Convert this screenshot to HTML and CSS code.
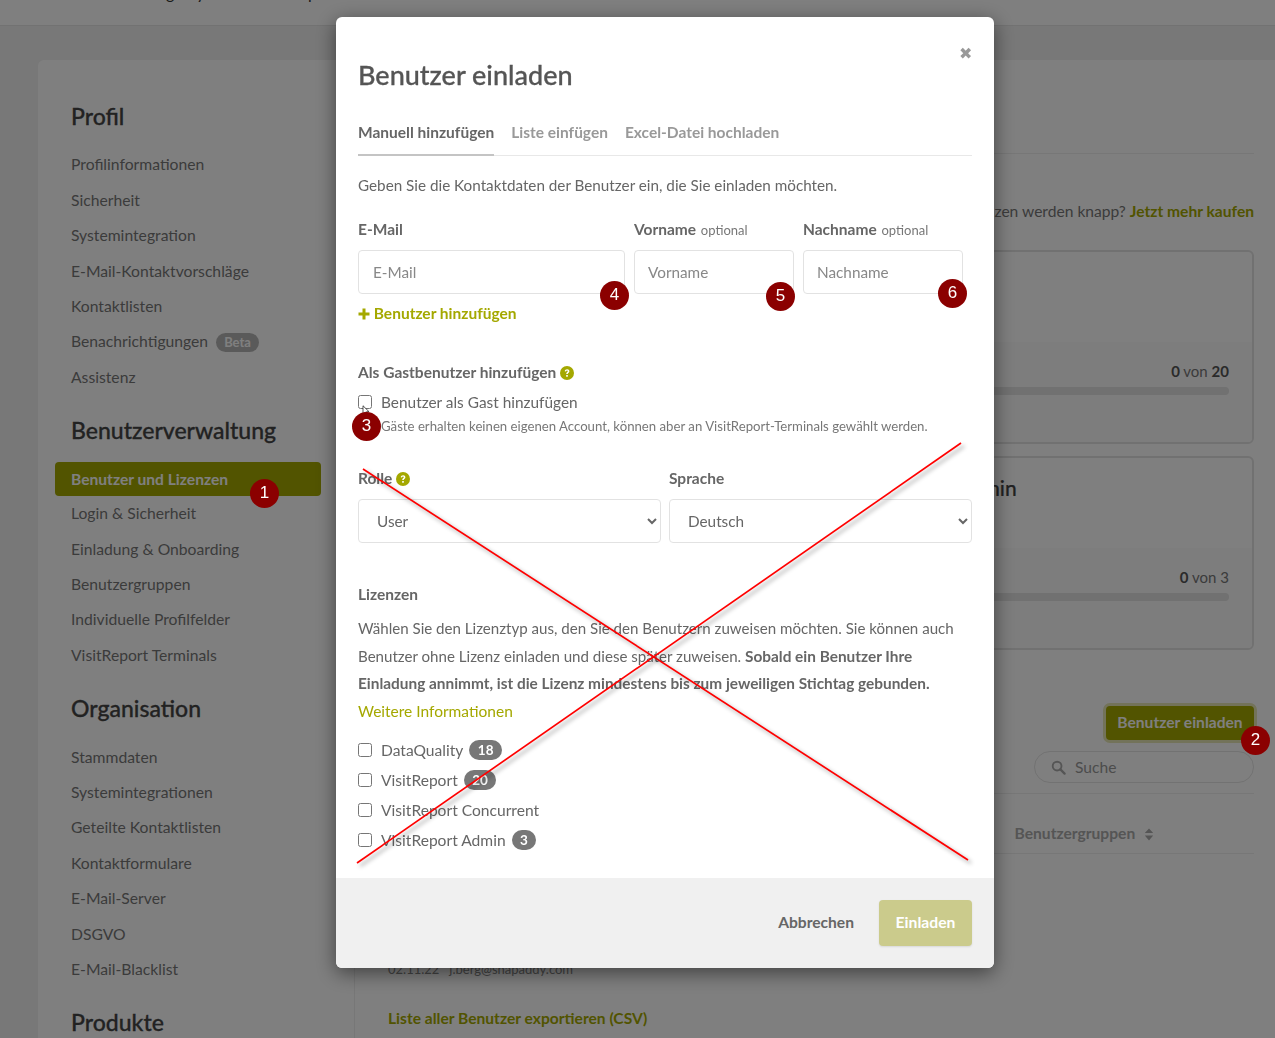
FILE: index.html
```html
<!DOCTYPE html>
<html lang="de">
<head>
    <meta charset="UTF-8">
    <title>Benutzer einladen</title>
    <link rel="stylesheet" href="styles.css">
</head>
<body>

    <div class="topbar"><span class="topbar-text">Registry Administrator panel</span></div>

    <div class="shell">
        <div class="side">
            <h2 class="side-title">Profil</h2>
            <a class="side-link">Profilinformationen</a>
            <a class="side-link">Sicherheit</a>
            <a class="side-link">Systemintegration</a>
            <a class="side-link">E-Mail-Kontaktvorschläge</a>
            <a class="side-link">Kontaktlisten</a>
            <a class="side-link">Benachrichtigungen <span class="beta">Beta</span></a>
            <a class="side-link">Assistenz</a>

            <h2 class="side-title">Benutzerverwaltung</h2>
            <a class="side-link active">Benutzer und Lizenzen</a>
            <a class="side-link">Login &amp; Sicherheit</a>
            <a class="side-link">Einladung &amp; Onboarding</a>
            <a class="side-link">Benutzergruppen</a>
            <a class="side-link">Individuelle Profilfelder</a>
            <a class="side-link">VisitReport Terminals</a>

            <h2 class="side-title">Organisation</h2>
            <a class="side-link">Stammdaten</a>
            <a class="side-link">Systemintegrationen</a>
            <a class="side-link">Geteilte Kontaktlisten</a>
            <a class="side-link">Kontaktformulare</a>
            <a class="side-link">E-Mail-Server</a>
            <a class="side-link">DSGVO</a>
            <a class="side-link">E-Mail-Blacklist</a>

            <h2 class="side-title">Produkte</h2>
        </div>

        <div class="main">
            <div class="main-rule"></div>
            <p class="low-note">Lizenzen werden knapp? <a class="green-link">Jetzt mehr kaufen</a></p>

            <div class="lic-card">
                <div class="lic-top"><h3 class="lic-name">VisitReport</h3></div>
                <div class="lic-bottom">
                    <div class="lic-count"><b>0</b> von <b>20</b></div>
                    <div class="lic-bar"></div>
                </div>
            </div>
            <div class="lic-card">
                <div class="lic-top"><h3 class="lic-name">VisitReport Admin</h3></div>
                <div class="lic-bottom">
                    <div class="lic-count"><b>0</b> von 3</div>
                    <div class="lic-bar"></div>
                </div>
            </div>

            <div class="tools">
                <button class="invite-btn">Benutzer einladen</button>
                <div class="search">
                    <svg class="search-icon" viewBox="0 0 16 16" width="15" height="15"><circle cx="6.5" cy="6.5" r="4.7" fill="none" stroke="currentColor" stroke-width="2"/><path d="M10 10l4.5 4.5" stroke="currentColor" stroke-width="2.4" stroke-linecap="round"/></svg>
                    Suche
                </div>
            </div>
            <div class="table-head">
                <span class="th">Benutzergruppen
                    <svg viewBox="0 0 10 14" width="10" height="13"><path d="M5 0.500L9.500 5.500H0.500zM5 13.500L0.500 8H9.500z" fill="currentColor"/></svg>
                </span>
            </div>
            <div class="table-row">02.11.22 &nbsp; j.berg@snapaddy.com</div>
            <a class="green-link export">Liste aller Benutzer exportieren (CSV)</a>
        </div>
    </div>

    <div class="backdrop"></div>

    <div class="modal">
        <div class="modal-body">
            <span class="close">&#10006;</span>
            <h1 class="modal-title">Benutzer einladen</h1>

            <div class="tabs">
                <span class="tab current">Manuell hinzufügen</span>
                <span class="tab">Liste einfügen</span>
                <span class="tab">Excel-Datei hochladen</span>
            </div>

            <p class="intro">Geben Sie die Kontaktdaten der Benutzer ein, die Sie einladen möchten.</p>

            <div class="user-row">
                <div class="field mail">
                    <label class="lbl">E-Mail</label>
                    <input class="inp" type="text" placeholder="E-Mail">
                </div>
                <div class="field name">
                    <label class="lbl">Vorname <span class="opt">optional</span></label>
                    <input class="inp" type="text" placeholder="Vorname">
                </div>
                <div class="field name">
                    <label class="lbl">Nachname <span class="opt">optional</span></label>
                    <input class="inp" type="text" placeholder="Nachname">
                </div>
            </div>
            <a class="add-user"><svg viewBox="0 0 12 12" width="12" height="12"><path d="M4.500 0.500h3v4h4v3h-4v4h-3v-4h-4v-3h4z" fill="currentColor"/></svg> Benutzer hinzufügen</a>

            <div class="lbl guest-head">Als Gastbenutzer hinzufügen
                <svg class="help" viewBox="0 0 14 14" width="14" height="14"><circle cx="7" cy="7" r="7" fill="currentColor"/><path d="M4.700 5.300c.2-1.300 1.200-2 2.400-2 1.300 0 2.300.8 2.300 1.900 0 1.700-1.700 1.600-1.700 2.900H6.200c0-1.900 1.600-1.900 1.600-2.800 0-.4-.3-.7-.8-.7s-.8.300-1 .9zM6.200 9h1.600v1.700H6.200z" fill="#fff"/></svg>
            </div>
            <label class="check"><input type="checkbox"> Benutzer als Gast hinzufügen</label>
            <p class="hint">Gäste erhalten keinen eigenen Account, können aber an VisitReport-Terminals gewählt werden.</p>

            <div class="select-row">
                <div class="field">
                    <div class="lbl">Rolle
                        <svg class="help" viewBox="0 0 14 14" width="14" height="14"><circle cx="7" cy="7" r="7" fill="currentColor"/><path d="M4.700 5.300c.2-1.300 1.200-2 2.400-2 1.300 0 2.300.8 2.300 1.900 0 1.700-1.700 1.600-1.700 2.900H6.200c0-1.900 1.600-1.900 1.600-2.800 0-.4-.3-.7-.8-.7s-.8.300-1 .9zM6.200 9h1.600v1.700H6.200z" fill="#fff"/></svg>
                    </div>
                    <select class="sel"><option>User</option></select>
                </div>
                <div class="field">
                    <div class="lbl">Sprache</div>
                    <select class="sel"><option>Deutsch</option></select>
                </div>
            </div>

            <div class="lbl lic-head">Lizenzen</div>
            <p class="lic-text">Wählen Sie den Lizenztyp aus, den Sie den Benutzern zuweisen möchten. Sie können auch Benutzer ohne Lizenz einladen und diese später zuweisen. <b>Sobald ein Benutzer Ihre Einladung annimmt, ist die Lizenz mindestens bis zum jeweiligen Stichtag gebunden.</b><br><a class="more">Weitere Informationen</a></p>

            <div class="lic-list">
                <label class="check"><input type="checkbox"> DataQuality <span class="num">18</span></label>
                <label class="check"><input type="checkbox"> VisitReport <span class="num">20</span></label>
                <label class="check"><input type="checkbox"> VisitReport Concurrent</label>
                <label class="check"><input type="checkbox"> VisitReport Admin <span class="num">3</span></label>
            </div>
        </div>
        <div class="modal-foot">
            <span class="cancel">Abbrechen</span>
            <button class="submit">Einladen</button>
        </div>
    </div>

    <!-- annotations painted on the screenshot -->
    <svg class="cross" width="1275" height="1038">
        <line x1="363" y1="469" x2="968" y2="860"/>
        <line x1="961" y1="443" x2="357" y2="863"/>
    </svg>
    <svg class="pointer" viewBox="0 0 10 16" width="8" height="12"><path d="M1 1v11l3-2.500 2 4.500 1.800-.8-2-4.300H9z" fill="#fff" stroke="#222" stroke-width="1"/></svg>
    <span class="mark m1">1</span>
    <span class="mark m2">2</span>
    <span class="mark m3">3</span>
    <span class="mark m4">4</span>
    <span class="mark m5">5</span>
    <span class="mark m6">6</span>

</body>
</html>
```

FILE: styles.css
```css
html, body {
    height: 1038px;
    overflow: hidden;
}
body {
    margin: 0;
    font-family: Lato, "Liberation Sans", sans-serif;
    font-size: 15.200px;
    color: #666;
    background-color: #f0f0f0;
}
p, h1, h2, h3 {
    margin: 0;
}

/* page behind the dialog */
.topbar {
    height: 25px;
    background-color: #fff;
    border-bottom: 1px solid #e4e4e4;
    overflow: hidden;
}
.topbar-text {
    display: block;
    margin: -17px 0 0 148px;
    font-size: 16px;
    line-height: 20px;
    color: #333;
}
.shell {
    display: flex;
    margin: 34px 0 0 38px;
    height: 1100px;
    background-color: #fff;
    border-radius: 6px 0 0 6px;
}
.side {
    width: 316px;
    flex: none;
    padding: 27.400px 0 0 0;
    border-right: 1px solid #eee;
}
.side-title {
    margin: 18.500px 0 16px 33px;
    font-size: 23px;
    font-weight: 500;
    line-height: 32px;
    color: #444;
    -webkit-text-stroke: 0.3px #444;
}
.side-title:first-child {
    margin: 13px 0 15px 33px;
}
.side-link {
    display: block;
    margin-left: 33px;
    height: 35.400px;
    line-height: 35.400px;
    font-size: 15.700px;
    color: #777;
}
.side-link.active {
    margin: 1.500px 33px 0.500px 17px;
    padding-left: 16px;
    height: 34px;
    line-height: 34px;
    font-size: 15.600px;
    font-weight: 700;
    color: #fff;
    background-color: #a4a800;
    border-radius: 4px;
}
.beta {
    display: inline-block;
    margin-left: 4px;
    padding: 0 8px;
    font-size: 13px;
    line-height: 19px;
    font-weight: 700;
    color: #fff;
    background-color: #b5b5b5;
    border-radius: 10px;
}
.main {
    flex: 1;
    padding: 0 21px 0 33px;
}
.main-rule {
    height: 93px;
    border-bottom: 1px solid #eee;
}
.low-note {
    margin-top: 46px;
    text-align: right;
    font-size: 15.600px;
    line-height: 22px;
    color: #777;
}
.green-link {
    font-weight: 700;
    color: #a4a800;
}
.lic-card {
    margin-top: 12px;
    height: 190px;
    border: 2px solid #e2e2e2;
    border-radius: 6px;
    overflow: hidden;
}
.low-note + .lic-card {
    margin-top: 28px;
}
.lic-top {
    height: 90px;
}
.lic-name {
    padding: 17px 0 0 458px;
    font-size: 21px;
    font-weight: 500;
    color: #444;
    -webkit-text-stroke: 0.2px #444;
}
.lic-bottom {
    height: 100px;
    padding: 17px 23px 0 0;
    box-sizing: border-box;
    background-color: #fafafa;
}
.lic-count {
    text-align: right;
    font-size: 15px;
    line-height: 24px;
    color: #777;
}
.lic-count b {
    color: #555;
}
.lic-bar {
    height: 8px;
    margin-top: 4px;
    background-color: #e2e2e2;
    border-radius: 4px;
}
.tools {
    display: flex;
    flex-direction: column;
    align-items: flex-end;
    margin-top: 56px;
    padding-bottom: 10px;
    border-bottom: 1px solid #eee;
}
.invite-btn {
    width: 148px;
    height: 34px;
    padding: 0 0 2px;
    font-family: inherit;
    font-size: 15.600px;
    font-weight: 700;
    color: #fff;
    background-color: #a4a800;
    border: 0;
    border-radius: 4px;
    box-shadow: 0 0 0 3px #e6e6b4;
}
.search {
    display: flex;
    align-items: center;
    gap: 9px;
    width: 220px;
    height: 32px;
    margin-top: 11px;
    padding-left: 16px;
    box-sizing: border-box;
    font-size: 15.600px;
    color: #999;
    border: 1px solid #e4e4e4;
    border-radius: 16px;
}
.search-icon {
    color: #aaa;
}
.table-head {
    display: flex;
    justify-content: flex-end;
    align-items: center;
    height: 60px;
    padding: 18px 100px 0 0;
    box-sizing: border-box;
    border-bottom: 1px solid #eee;
}
.th {
    font-size: 15.600px;
    font-weight: 700;
    color: #aaa;
}
.th svg {
    margin-left: 5px;
    vertical-align: -2px;
}
.table-row {
    margin-top: 105px;
    font-size: 13px;
    line-height: 20px;
    color: #888;
}
.export {
    display: block;
    margin-top: 29px;
    font-size: 15.600px;
    line-height: 20px;
}

.backdrop {
    position: fixed;
    inset: 0;
    background-color: rgba(0, 0, 0, 0.5);
}

/* dialog */
.modal {
    position: fixed;
    top: 17px;
    left: 336px;
    width: 658px;
    height: 951px;
    display: flex;
    flex-direction: column;
    background-color: #fff;
    border-radius: 6px;
    box-shadow: 0 5px 20px rgba(0, 0, 0, 0.5);
    overflow: hidden;
}
.modal-body {
    position: relative;
    flex: 1;
    padding: 0 22px;
}
.close {
    position: absolute;
    top: 27px;
    right: 22px;
    font-size: 16px;
    line-height: 18px;
    color: #999;
}
.modal-title {
    padding-top: 40px;
    font-size: 27px;
    font-weight: 500;
    line-height: 36px;
    color: #555;
    -webkit-text-stroke: 0.3px #555;
}
.tabs {
    display: flex;
    gap: 17px;
    margin-top: 28px;
    border-bottom: 1px solid #e8e8e8;
}
.tab {
    padding-bottom: 12px;
    font-size: 15.500px;
    font-weight: 700;
    line-height: 22px;
    color: #999;
}
.tab.current {
    color: #666;
    box-shadow: 0 1px 0 0 #c4c4c4, inset 0 -1px 0 0 #c4c4c4;
}
.intro {
    margin-top: 18px;
    font-size: 15.250px;
    line-height: 22px;
}
.user-row {
    display: flex;
    gap: 9px;
    margin-top: 22px;
}
.field {
    flex: 1;
}
.mail {
    flex: none;
    width: 267px;
}
.name {
    flex: none;
    width: 160px;
}
.lbl {
    display: block;
    height: 22px;
    font-size: 15.500px;
    font-weight: 700;
    line-height: 22px;
    color: #666;
}
.opt {
    margin-left: 1px;
    font-size: 13px;
    font-weight: 400;
    line-height: 1;
    color: #777;
}
.inp, .sel {
    display: block;
    width: 100%;
    height: 44px;
    margin-top: 10px;
    box-sizing: border-box;
    font-family: inherit;
    font-size: 15.300px;
    color: #666;
    background-color: #fff;
    border: 1px solid #e2e2e2;
    border-radius: 4px;
}
.inp {
    padding: 0 14px;
}
.name .inp {
    padding: 0 13px;
}
.inp::placeholder {
    color: #888;
    opacity: 1;
}
.sel {
    padding: 0 14px;
}
.add-user {
    display: block;
    margin-top: 8px;
    font-size: 15.500px;
    font-weight: 700;
    line-height: 22px;
    color: #a4a800;
}
.add-user svg {
    vertical-align: -1px;
}
.guest-head {
    margin-top: 37px;
}
.help {
    color: #a4a800;
    vertical-align: -2px;
}
.check {
    display: flex;
    align-items: center;
    gap: 9px;
    height: 30px;
    font-size: 15.400px;
    color: #666;
}
.check input {
    width: 14px;
    height: 14px;
    margin: 0;
    flex: none;
}
.guest-head + .check {
    margin-top: 4px;
}
.hint {
    margin: 0 0 0 23px;
    font-size: 13.200px;
    line-height: 18px;
    color: #777;
}
.select-row {
    display: flex;
    gap: 8px;
    margin-top: 32px;
}
.lic-head {
    margin-top: 40px;
}
.lic-text {
    margin-top: 10px;
    font-size: 15.100px;
    line-height: 27.600px;
}
.lic-text b {
    font-size: 15.400px;
}
.more {
    font-size: 15.500px;
    color: #a4a800;
}
.lic-list {
    margin-top: 10px;
}
.lic-list .check {
    font-size: 15.600px;
}
.num {
    display: inline-block;
    min-width: 7px;
    margin-left: -3px;
    padding: 0 8.500px;
    font-size: 13.500px;
    font-weight: 700;
    line-height: 20px;
    text-align: center;
    color: #fff;
    background-color: #777;
    border-radius: 10px;
}
.modal-foot {
    display: flex;
    justify-content: flex-end;
    align-items: center;
    gap: 25px;
    flex: none;
    height: 90px;
    padding: 0 22px;
    background-color: #f0f0f0;
}
.cancel {
    padding-bottom: 2px;
    font-size: 15.600px;
    font-weight: 700;
    color: #666;
}
.submit {
    width: 93px;
    height: 46px;
    padding: 0 0 3px;
    font-family: inherit;
    font-size: 15.700px;
    font-weight: 700;
    color: #fff;
    background-color: #cbcb8c;
    border: 0;
    border-radius: 4px;
    box-shadow: 0 1px 2px rgba(0, 0, 0, 0.1);
}

/* annotations */
.cross {
    position: fixed;
    top: 0;
    left: 0;
    pointer-events: none;
}
.cross line {
    stroke: #f00;
    stroke-width: 1.700;
    filter: drop-shadow(3px 3px 2px rgba(0, 0, 0, 0.4));
}
.pointer {
    position: fixed;
    top: 405px;
    left: 362px;
}
.mark {
    position: fixed;
    width: 29px;
    height: 29px;
    font-family: "Liberation Sans", sans-serif;
    font-size: 17px;
    line-height: 28px;
    text-align: center;
    color: #fff;
    background-color: #8b0000;
    border-radius: 50%;
}
.m1 { left: 250px; top: 479px; }
.m2 { left: 1241px; top: 726px; }
.m3 { left: 352px; top: 412px; }
.m4 { left: 600px; top: 281px; }
.m5 { left: 766px; top: 282px; }
.m6 { left: 938px; top: 279px; }
```
